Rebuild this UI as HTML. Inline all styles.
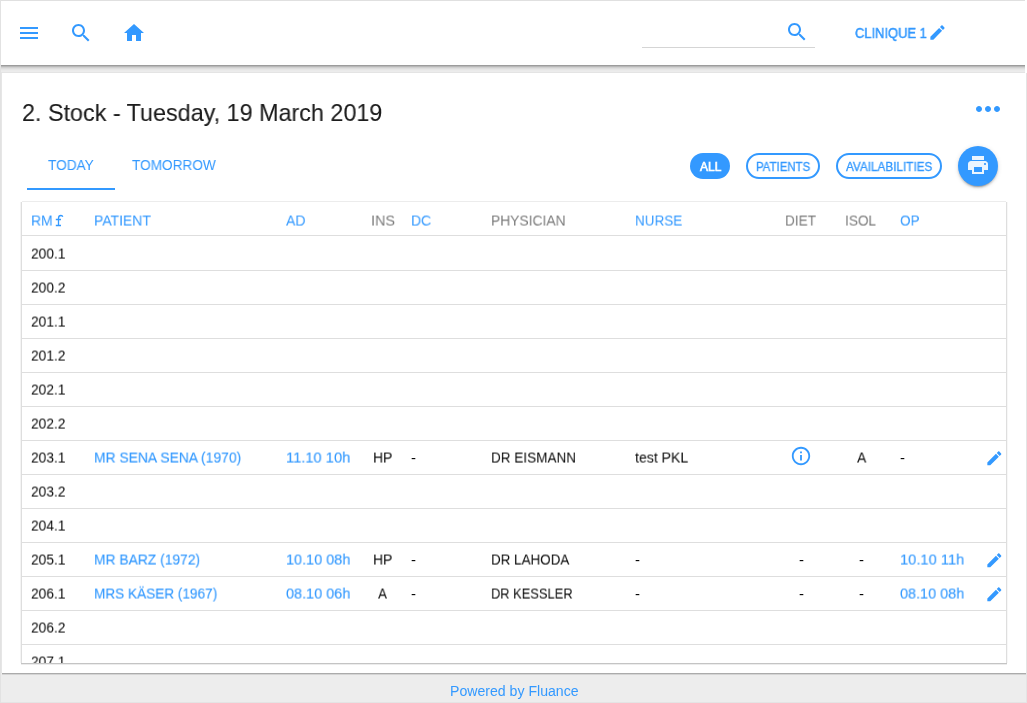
<!DOCTYPE html>
<html><head><meta charset="utf-8"><style>
html,body{margin:0;padding:0;}
body{width:1027px;height:703px;position:relative;overflow:hidden;background:#ededed;font-family:"Liberation Sans",sans-serif;}
.t{position:absolute;white-space:nowrap;will-change:transform;}
.i{position:absolute;display:block;}
.r{position:absolute;}
.hl{position:absolute;left:22px;width:984px;height:1px;background:#dedede}
.pill{position:absolute;border-radius:13px}
#fab{position:absolute;left:958px;top:146px;width:40px;height:40px;border-radius:50%;background:#3399ff;box-shadow:0 3px 1px -2px rgba(0,0,0,.2),0 2px 2px 0 rgba(0,0,0,.14),0 1px 5px 0 rgba(0,0,0,.12)}

</style></head><body>
<div class="r" style="left:0px;top:0px;width:1px;height:703px;background:#e2e2e2;"></div>
<div class="r" style="left:1px;top:0px;width:1024px;height:1px;background:#e0e0e0;"></div>
<div class="r" style="left:1025px;top:0px;width:2px;height:73px;background:#ffffff;"></div>
<div class="r" style="left:1026px;top:73px;width:1px;height:630px;background:#e4e4e4;"></div>
<div class="r" style="left:1px;top:702px;width:1025px;height:1px;background:#e4e4e4;"></div>
<div class="r" style="left:1px;top:1px;width:1026px;height:64px;background:#ffffff;"></div>
<div class="r" style="left:1px;top:65px;width:1024px;height:1px;background:#9c9c9c;"></div>
<div class="r" style="left:1px;top:66px;width:1024px;height:1px;background:#b8b8b8;"></div>
<div class="r" style="left:1px;top:67px;width:1024px;height:1px;background:#d0d0d0;"></div>
<div class="r" style="left:1px;top:68px;width:1024px;height:1px;background:#dddddd;"></div>
<div class="r" style="left:1px;top:69px;width:1024px;height:1px;background:#e6e6e6;"></div>
<div class="r" style="left:1px;top:70px;width:1024px;height:1px;background:#eaeaea;"></div>
<div class="r" style="left:1px;top:71px;width:1024px;height:1px;background:#ececec;"></div>
<div class="r" style="left:1px;top:72px;width:1024px;height:1px;background:#e4e4e4;"></div>
<svg class="i" style="left:17px;top:21px;width:24px;height:24px" viewBox="0 0 24 24"><path fill="#3399ff" d="M3 18h18v-2H3v2zm0-5h18v-2H3v2zm0-7v2h18V6H3z"/></svg>
<svg class="i" style="left:69px;top:21px;width:24px;height:24px" viewBox="0 0 24 24"><path fill="#3399ff" d="M15.5 14h-.79l-.28-.27C15.41 12.59 16 11.11 16 9.5 16 5.91 13.09 3 9.5 3S3 5.91 3 9.5 5.91 16 9.5 16c1.61 0 3.09-.59 4.23-1.570l.27.28v.79l5 4.99L20.49 19l-4.99-5zm-6 0C7.01 14 5 11.99 5 9.5S7.010 5 9.5 5 14 7.01 14 9.5 11.99 14 9.5 14z"/></svg>
<svg class="i" style="left:121.5px;top:21px;width:24px;height:24px" viewBox="0 0 24 24"><path fill="#3399ff" d="M10 20v-6h4v6h5v-8h3L12 3 2 12h3v8z"/></svg>
<div style="position:absolute;left:642px;top:47px;width:173px;height:1px;background:#d5d5d5"></div>
<svg class="i" style="left:785px;top:20px;width:24px;height:24px" viewBox="0 0 24 24"><path fill="#3399ff" d="M15.5 14h-.79l-.28-.27C15.41 12.59 16 11.11 16 9.5 16 5.91 13.09 3 9.5 3S3 5.91 3 9.5 5.91 16 9.5 16c1.61 0 3.09-.59 4.23-1.570l.27.28v.79l5 4.99L20.49 19l-4.99-5zm-6 0C7.01 14 5 11.99 5 9.5S7.010 5 9.5 5 14 7.01 14 9.5 11.99 14 9.5 14z"/></svg>
<div class="t" style="left:855.20px;top:26px;font-size:14px;line-height:14px;font-weight:400;color:#3399ff;letter-spacing:0.000px;font-family:'Liberation Sans', sans-serif;transform:scale(0.9229,1.000);transform-origin:0 100%;-webkit-text-stroke:0.5px #3399ff;">CLINIQUE 1</div>
<svg class="i" style="left:928.3px;top:23.3px;width:19px;height:19px" viewBox="0 0 24 24"><path fill="#3399ff" d="M3 17.25V21h3.75L17.81 9.94l-3.75-3.75L3 17.25zM20.71 7.04c.39-.39.39-1.02 0-1.41l-2.34-2.34c-.39-.39-1.02-.39-1.41 0l-1.83 1.83 3.75 3.75 1.83-1.83z"/></svg>
<div class="r" style="left:2px;top:73px;width:1024px;height:600px;background:#ffffff;"></div>
<div class="r" style="left:1px;top:73px;width:1px;height:600px;background:#e6e6e6;"></div>
<div class="r" style="left:2px;top:673px;width:1024px;height:1px;background:#ababab;"></div>
<div class="r" style="left:2px;top:674px;width:1024px;height:1px;background:#d4d4d4;"></div>
<div class="t" style="left:22.00px;top:101px;font-size:24px;line-height:24px;font-weight:400;color:#1c1c1c;letter-spacing:0.000px;font-family:'Liberation Sans', sans-serif;transform:scale(0.9727,1.000);transform-origin:0 100%;-webkit-text-stroke:0.1px #1c1c1c;">2. Stock - Tuesday, 19 March 2019</div>
<svg class="i" style="left:970px;top:91px;width:36px;height:36px" viewBox="0 0 24 24"><path fill="#3399ff" d="M6 10c-1.1 0-2 .9-2 2s.9 2 2 2 2-.9 2-2-.9-2-2-2zm12 0c-1.1 0-2 .9-2 2s.9 2 2 2 2-.9 2-2-.9-2-2-2zm-6 0c-1.1 0-2 .9-2 2s.9 2 2 2 2-.9 2-2-.9-2-2-2z"/></svg>
<div class="t" style="left:48.20px;top:158px;font-size:14px;line-height:14px;font-weight:400;color:#3399ff;letter-spacing:0.000px;font-family:'Liberation Sans', sans-serif;transform:scale(0.9757,1.000);transform-origin:0 100%;">TODAY</div>
<div class="t" style="left:131.50px;top:158px;font-size:14px;line-height:14px;font-weight:400;color:#3399ff;letter-spacing:0.000px;font-family:'Liberation Sans', sans-serif;transform:scale(0.9738,1.000);transform-origin:0 100%;">TOMORROW</div>
<div style="position:absolute;left:27px;top:188px;width:88px;height:2px;background:#3399ff"></div>
<div class="pill" style="left:690px;top:153px;width:40px;height:26px;background:#3399ff"></div>
<div class="t" style="left:699.70px;top:161px;font-size:12px;line-height:12px;font-weight:400;color:#fff;letter-spacing:0.000px;font-family:'Liberation Sans', sans-serif;transform:scale(0.9978,1.000);transform-origin:0 100%;-webkit-text-stroke:0.6px #fff;">ALL</div>
<div class="pill" style="left:746px;top:153px;width:74px;height:26px;border:2px solid #3399ff;box-sizing:border-box"></div>
<div class="t" style="left:756.00px;top:161px;font-size:12px;line-height:12px;font-weight:400;color:#3399ff;letter-spacing:0.000px;font-family:'Liberation Sans', sans-serif;transform:scale(0.9509,1.000);transform-origin:0 100%;-webkit-text-stroke:0.3px #3399ff;">PATIENTS</div>
<div class="pill" style="left:836px;top:153px;width:106px;height:26px;border:2px solid #3399ff;box-sizing:border-box"></div>
<div class="t" style="left:845.90px;top:161px;font-size:12px;line-height:12px;font-weight:400;color:#3399ff;letter-spacing:0.000px;font-family:'Liberation Sans', sans-serif;transform:scale(0.9778,1.000);transform-origin:0 100%;-webkit-text-stroke:0.3px #3399ff;">AVAILABILITIES</div>
<div id="fab"></div>
<svg class="i" style="left:966px;top:153px;width:24px;height:24px" viewBox="0 0 24 24"><path fill="rgba(255,255,255,.9)" d="M19 8H5c-1.66 0-3 1.34-3 3v6h4v4h12v-4h4v-6c0-1.66-1.34-3-3-3zm-3 11H8v-5h8v5zm3-7c-.55 0-1-.45-1-1s.45-1 1-1 1 .45 1 1-.45 1-1 1zm1-9H6v4h12V3z"/></svg>
<div class="r" style="left:22px;top:202px;width:984px;height:461px;background:#ffffff;"></div>
<div class="r" style="left:21px;top:202px;width:1px;height:461px;background:#dedede;"></div>
<div class="r" style="left:20px;top:202px;width:1px;height:461px;background:#f4f4f4;"></div>
<div class="r" style="left:22px;top:201px;width:984px;height:1px;background:#ececec;"></div>
<div class="r" style="left:1006px;top:202px;width:1px;height:461px;background:#dedede;"></div>
<div class="r" style="left:1007px;top:202px;width:1px;height:461px;background:#f7f7f7;"></div>
<div class="r" style="left:21px;top:663px;width:986px;height:1px;background:#c4c4c4;"></div>
<div class="r" style="left:21px;top:664px;width:986px;height:1px;background:#ececec;"></div>
<div class="hl" style="top:235px"></div>
<div class="hl" style="top:270px"></div>
<div class="hl" style="top:304px"></div>
<div class="hl" style="top:338px"></div>
<div class="hl" style="top:372px"></div>
<div class="hl" style="top:406px"></div>
<div class="hl" style="top:440px"></div>
<div class="hl" style="top:474px"></div>
<div class="hl" style="top:508px"></div>
<div class="hl" style="top:542px"></div>
<div class="hl" style="top:576px"></div>
<div class="hl" style="top:610px"></div>
<div class="hl" style="top:644px"></div>
<div class="t" style="left:30.70px;top:213px;font-size:15px;line-height:15px;font-weight:400;color:#3399ff;letter-spacing:0.000px;font-family:'Liberation Sans', sans-serif;transform:scale(0.9303,1.030);transform-origin:0 100%;">RM</div>
<svg class="i" style="left:50px;top:210px;width:20px;height:20px" viewBox="50 210 20 20"><path d="M58.5 226V218.2Q58.5 215.5 61 215.5Q62.4 215.5 62.8 216.7M55.8 219.5H61M55.8 225.5H61" fill="none" stroke="#3399ff" stroke-width="1.3"/></svg>
<div class="t" style="left:93.50px;top:213px;font-size:15px;line-height:15px;font-weight:400;color:#3399ff;letter-spacing:0.000px;font-family:'Liberation Sans', sans-serif;transform:scale(0.9311,1.030);transform-origin:0 100%;">PATIENT</div>
<div class="t" style="left:286.10px;top:213px;font-size:15px;line-height:15px;font-weight:400;color:#3399ff;letter-spacing:0.000px;font-family:'Liberation Sans', sans-serif;transform:scale(0.9359,1.030);transform-origin:0 100%;">AD</div>
<div class="t" style="left:370.60px;top:213px;font-size:15px;line-height:15px;font-weight:400;color:rgba(0,0,0,.54);letter-spacing:0.000px;font-family:'Liberation Sans', sans-serif;transform:scale(0.9598,1.030);transform-origin:0 100%;">INS</div>
<div class="t" style="left:410.80px;top:213px;font-size:15px;line-height:15px;font-weight:400;color:#3399ff;letter-spacing:0.000px;font-family:'Liberation Sans', sans-serif;transform:scale(0.9326,1.030);transform-origin:0 100%;">DC</div>
<div class="t" style="left:490.80px;top:213px;font-size:15px;line-height:15px;font-weight:400;color:rgba(0,0,0,.54);letter-spacing:0.000px;font-family:'Liberation Sans', sans-serif;transform:scale(0.9227,1.030);transform-origin:0 100%;">PHYSICIAN</div>
<div class="t" style="left:634.80px;top:213px;font-size:15px;line-height:15px;font-weight:400;color:#3399ff;letter-spacing:0.000px;font-family:'Liberation Sans', sans-serif;transform:scale(0.8988,1.030);transform-origin:0 100%;">NURSE</div>
<div class="t" style="left:785.40px;top:213px;font-size:15px;line-height:15px;font-weight:400;color:rgba(0,0,0,.54);letter-spacing:0.000px;font-family:'Liberation Sans', sans-serif;transform:scale(0.9072,1.030);transform-origin:0 100%;">DIET</div>
<div class="t" style="left:845.40px;top:213px;font-size:15px;line-height:15px;font-weight:400;color:rgba(0,0,0,.54);letter-spacing:0.000px;font-family:'Liberation Sans', sans-serif;transform:scale(0.9068,1.030);transform-origin:0 100%;">ISOL</div>
<div class="t" style="left:900.20px;top:213px;font-size:15px;line-height:15px;font-weight:400;color:#3399ff;letter-spacing:0.000px;font-family:'Liberation Sans', sans-serif;transform:scale(0.8997,1.030);transform-origin:0 100%;">OP</div>
<div class="t" style="left:31.20px;top:246px;font-size:15px;line-height:15px;font-weight:400;color:#0a0a0a;letter-spacing:0.000px;font-family:'Liberation Sans', sans-serif;transform:scale(0.9166,1.030);transform-origin:0 100%;">200.1</div>
<div class="t" style="left:31.20px;top:280px;font-size:15px;line-height:15px;font-weight:400;color:#0a0a0a;letter-spacing:0.000px;font-family:'Liberation Sans', sans-serif;transform:scale(0.9166,1.030);transform-origin:0 100%;">200.2</div>
<div class="t" style="left:31.20px;top:314px;font-size:15px;line-height:15px;font-weight:400;color:#0a0a0a;letter-spacing:0.000px;font-family:'Liberation Sans', sans-serif;transform:scale(0.9166,1.030);transform-origin:0 100%;">201.1</div>
<div class="t" style="left:31.20px;top:348px;font-size:15px;line-height:15px;font-weight:400;color:#0a0a0a;letter-spacing:0.000px;font-family:'Liberation Sans', sans-serif;transform:scale(0.9166,1.030);transform-origin:0 100%;">201.2</div>
<div class="t" style="left:31.20px;top:382px;font-size:15px;line-height:15px;font-weight:400;color:#0a0a0a;letter-spacing:0.000px;font-family:'Liberation Sans', sans-serif;transform:scale(0.9166,1.030);transform-origin:0 100%;">202.1</div>
<div class="t" style="left:31.20px;top:416px;font-size:15px;line-height:15px;font-weight:400;color:#0a0a0a;letter-spacing:0.000px;font-family:'Liberation Sans', sans-serif;transform:scale(0.9166,1.030);transform-origin:0 100%;">202.2</div>
<div class="t" style="left:31.20px;top:450px;font-size:15px;line-height:15px;font-weight:400;color:#0a0a0a;letter-spacing:0.000px;font-family:'Liberation Sans', sans-serif;transform:scale(0.9166,1.030);transform-origin:0 100%;">203.1</div>
<div class="t" style="left:31.20px;top:484px;font-size:15px;line-height:15px;font-weight:400;color:#0a0a0a;letter-spacing:0.000px;font-family:'Liberation Sans', sans-serif;transform:scale(0.9166,1.030);transform-origin:0 100%;">203.2</div>
<div class="t" style="left:31.20px;top:518px;font-size:15px;line-height:15px;font-weight:400;color:#0a0a0a;letter-spacing:0.000px;font-family:'Liberation Sans', sans-serif;transform:scale(0.9166,1.030);transform-origin:0 100%;">204.1</div>
<div class="t" style="left:31.20px;top:552px;font-size:15px;line-height:15px;font-weight:400;color:#0a0a0a;letter-spacing:0.000px;font-family:'Liberation Sans', sans-serif;transform:scale(0.9166,1.030);transform-origin:0 100%;">205.1</div>
<div class="t" style="left:31.20px;top:586px;font-size:15px;line-height:15px;font-weight:400;color:#0a0a0a;letter-spacing:0.000px;font-family:'Liberation Sans', sans-serif;transform:scale(0.9166,1.030);transform-origin:0 100%;">206.1</div>
<div class="t" style="left:31.20px;top:620px;font-size:15px;line-height:15px;font-weight:400;color:#0a0a0a;letter-spacing:0.000px;font-family:'Liberation Sans', sans-serif;transform:scale(0.9166,1.030);transform-origin:0 100%;">206.2</div>
<div style="position:absolute;left:0;top:0;width:1027px;height:663px;overflow:hidden">
<div class="t" style="left:31.20px;top:654px;font-size:15px;line-height:15px;font-weight:400;color:#0a0a0a;letter-spacing:0.000px;font-family:'Liberation Sans', sans-serif;transform:scale(0.9166,1.030);transform-origin:0 100%;">207.1</div>
</div>
<div class="t" style="left:94.30px;top:450px;font-size:15px;line-height:15px;font-weight:400;color:#3399ff;letter-spacing:0.000px;font-family:'Liberation Sans', sans-serif;transform:scale(0.9245,1.030);transform-origin:0 100%;-webkit-text-stroke:0.12px #3399ff;">MR SENA SENA (1970)</div>
<div class="t" style="left:286.00px;top:450px;font-size:15px;line-height:15px;font-weight:400;color:#3399ff;letter-spacing:0.000px;font-family:'Liberation Sans', sans-serif;transform:scale(0.9798,1.030);transform-origin:0 100%;-webkit-text-stroke:0.12px #3399ff;">11.10 10h</div>
<div class="t" style="left:372.80px;top:450px;font-size:15px;line-height:15px;font-weight:400;color:#0a0a0a;letter-spacing:0.000px;font-family:'Liberation Sans', sans-serif;transform:scale(0.9311,1.030);transform-origin:0 100%;">HP</div>
<div class="t" style="left:410.90px;top:450px;font-size:15px;line-height:15px;font-weight:400;color:#0a0a0a;letter-spacing:0.000px;font-family:'Liberation Sans', sans-serif;transform:scale(1.0000,1.030);transform-origin:0 100%;">-</div>
<div class="t" style="left:491.20px;top:450px;font-size:15px;line-height:15px;font-weight:400;color:#0a0a0a;letter-spacing:0.000px;font-family:'Liberation Sans', sans-serif;transform:scale(0.9037,1.030);transform-origin:0 100%;">DR EISMANN</div>
<div class="t" style="left:635.40px;top:450px;font-size:15px;line-height:15px;font-weight:400;color:#0a0a0a;letter-spacing:0.000px;font-family:'Liberation Sans', sans-serif;transform:scale(0.9400,1.030);transform-origin:0 100%;">test PKL</div>
<svg class="i" style="left:790px;top:445px;width:22px;height:22px" viewBox="0 0 24 24"><path fill="#3399ff" d="M11 17h2v-6h-2v6zm1-15C6.48 2 2 6.48 2 12s4.48 10 10 10 10-4.48 10-10S17.52 2 12 2zm0 18c-4.41 0-8-3.590-8-8s3.59-8 8-8 8 3.59 8 8-3.59 8-8 8zM11 9h2V7h-2v2z"/></svg>
<div class="t" style="left:856.50px;top:450px;font-size:15px;line-height:15px;font-weight:400;color:#0a0a0a;letter-spacing:0.000px;font-family:'Liberation Sans', sans-serif;transform:scale(0.9295,1.030);transform-origin:0 100%;">A</div>
<div class="t" style="left:900.20px;top:450px;font-size:15px;line-height:15px;font-weight:400;color:#0a0a0a;letter-spacing:0.000px;font-family:'Liberation Sans', sans-serif;transform:scale(1.0000,1.030);transform-origin:0 100%;">-</div>
<svg class="i" style="left:984.6px;top:448.6px;width:18.7px;height:18.7px" viewBox="0 0 24 24"><path fill="#3399ff" d="M3 17.25V21h3.75L17.81 9.94l-3.75-3.75L3 17.25zM20.71 7.04c.39-.39.39-1.02 0-1.41l-2.34-2.34c-.39-.39-1.02-.39-1.41 0l-1.83 1.83 3.75 3.75 1.83-1.83z"/></svg>
<div class="t" style="left:94.30px;top:552px;font-size:15px;line-height:15px;font-weight:400;color:#3399ff;letter-spacing:0.000px;font-family:'Liberation Sans', sans-serif;transform:scale(0.9223,1.030);transform-origin:0 100%;-webkit-text-stroke:0.12px #3399ff;">MR BARZ (1972)</div>
<div class="t" style="left:286.00px;top:552px;font-size:15px;line-height:15px;font-weight:400;color:#3399ff;letter-spacing:0.000px;font-family:'Liberation Sans', sans-serif;transform:scale(0.9635,1.030);transform-origin:0 100%;-webkit-text-stroke:0.12px #3399ff;">10.10 08h</div>
<div class="t" style="left:372.80px;top:552px;font-size:15px;line-height:15px;font-weight:400;color:#0a0a0a;letter-spacing:0.000px;font-family:'Liberation Sans', sans-serif;transform:scale(0.9311,1.030);transform-origin:0 100%;">HP</div>
<div class="t" style="left:410.90px;top:552px;font-size:15px;line-height:15px;font-weight:400;color:#0a0a0a;letter-spacing:0.000px;font-family:'Liberation Sans', sans-serif;transform:scale(1.0000,1.030);transform-origin:0 100%;">-</div>
<div class="t" style="left:491.20px;top:552px;font-size:15px;line-height:15px;font-weight:400;color:#0a0a0a;letter-spacing:0.000px;font-family:'Liberation Sans', sans-serif;transform:scale(0.8946,1.030);transform-origin:0 100%;">DR LAHODA</div>
<div class="t" style="left:635.40px;top:552px;font-size:15px;line-height:15px;font-weight:400;color:#0a0a0a;letter-spacing:0.000px;font-family:'Liberation Sans', sans-serif;transform:scale(1.0000,1.030);transform-origin:0 100%;">-</div>
<div class="t" style="left:799.00px;top:552px;font-size:15px;line-height:15px;font-weight:400;color:#0a0a0a;letter-spacing:0.000px;font-family:'Liberation Sans', sans-serif;transform:scale(1.0000,1.030);transform-origin:0 100%;">-</div>
<div class="t" style="left:859.00px;top:552px;font-size:15px;line-height:15px;font-weight:400;color:#0a0a0a;letter-spacing:0.000px;font-family:'Liberation Sans', sans-serif;transform:scale(1.0000,1.030);transform-origin:0 100%;">-</div>
<div class="t" style="left:899.80px;top:552px;font-size:15px;line-height:15px;font-weight:400;color:#3399ff;letter-spacing:0.000px;font-family:'Liberation Sans', sans-serif;transform:scale(0.9783,1.030);transform-origin:0 100%;-webkit-text-stroke:0.12px #3399ff;">10.10 11h</div>
<svg class="i" style="left:984.6px;top:550.6px;width:18.7px;height:18.7px" viewBox="0 0 24 24"><path fill="#3399ff" d="M3 17.25V21h3.75L17.81 9.94l-3.75-3.75L3 17.25zM20.71 7.04c.39-.39.39-1.02 0-1.41l-2.34-2.34c-.39-.39-1.02-.39-1.41 0l-1.83 1.83 3.75 3.75 1.83-1.83z"/></svg>
<div class="t" style="left:94.30px;top:586px;font-size:15px;line-height:15px;font-weight:400;color:#3399ff;letter-spacing:0.000px;font-family:'Liberation Sans', sans-serif;transform:scale(0.9066,1.030);transform-origin:0 100%;-webkit-text-stroke:0.12px #3399ff;">MRS KÄSER (1967)</div>
<div class="t" style="left:286.00px;top:586px;font-size:15px;line-height:15px;font-weight:400;color:#3399ff;letter-spacing:0.000px;font-family:'Liberation Sans', sans-serif;transform:scale(0.9635,1.030);transform-origin:0 100%;-webkit-text-stroke:0.12px #3399ff;">08.10 06h</div>
<div class="t" style="left:377.50px;top:586px;font-size:15px;line-height:15px;font-weight:400;color:#0a0a0a;letter-spacing:0.000px;font-family:'Liberation Sans', sans-serif;transform:scale(0.8996,1.030);transform-origin:0 100%;">A</div>
<div class="t" style="left:410.90px;top:586px;font-size:15px;line-height:15px;font-weight:400;color:#0a0a0a;letter-spacing:0.000px;font-family:'Liberation Sans', sans-serif;transform:scale(1.0000,1.030);transform-origin:0 100%;">-</div>
<div class="t" style="left:491.20px;top:586px;font-size:15px;line-height:15px;font-weight:400;color:#0a0a0a;letter-spacing:0.000px;font-family:'Liberation Sans', sans-serif;transform:scale(0.8586,1.030);transform-origin:0 100%;">DR KESSLER</div>
<div class="t" style="left:635.40px;top:586px;font-size:15px;line-height:15px;font-weight:400;color:#0a0a0a;letter-spacing:0.000px;font-family:'Liberation Sans', sans-serif;transform:scale(1.0000,1.030);transform-origin:0 100%;">-</div>
<div class="t" style="left:799.00px;top:586px;font-size:15px;line-height:15px;font-weight:400;color:#0a0a0a;letter-spacing:0.000px;font-family:'Liberation Sans', sans-serif;transform:scale(1.0000,1.030);transform-origin:0 100%;">-</div>
<div class="t" style="left:859.00px;top:586px;font-size:15px;line-height:15px;font-weight:400;color:#0a0a0a;letter-spacing:0.000px;font-family:'Liberation Sans', sans-serif;transform:scale(1.0000,1.030);transform-origin:0 100%;">-</div>
<div class="t" style="left:899.80px;top:586px;font-size:15px;line-height:15px;font-weight:400;color:#3399ff;letter-spacing:0.000px;font-family:'Liberation Sans', sans-serif;transform:scale(0.9620,1.030);transform-origin:0 100%;-webkit-text-stroke:0.12px #3399ff;">08.10 08h</div>
<svg class="i" style="left:984.6px;top:584.6px;width:18.7px;height:18.7px" viewBox="0 0 24 24"><path fill="#3399ff" d="M3 17.25V21h3.75L17.81 9.94l-3.75-3.75L3 17.25zM20.71 7.04c.39-.39.39-1.02 0-1.41l-2.34-2.34c-.39-.39-1.02-.39-1.41 0l-1.83 1.83 3.75 3.75 1.83-1.83z"/></svg>
<div class="t" style="left:449.90px;top:684px;font-size:14px;line-height:14px;font-weight:400;color:#3399ff;letter-spacing:0.000px;font-family:'Liberation Sans', sans-serif;transform:scale(1.0076,1.000);transform-origin:0 100%;">Powered by Fluance</div>
</body></html>
